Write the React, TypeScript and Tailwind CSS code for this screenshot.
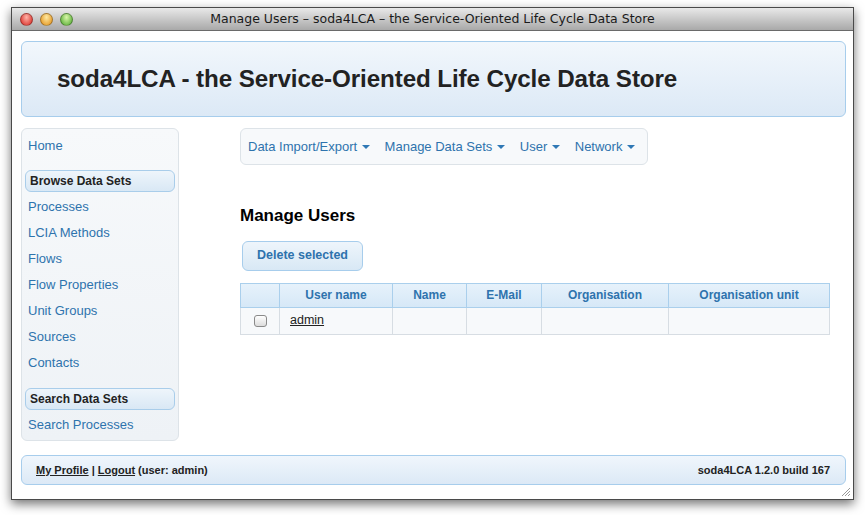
import React from 'react';

const sideLinks1 = ['Processes', 'LCIA Methods', 'Flows', 'Flow Properties', 'Unit Groups', 'Sources', 'Contacts'];
const navItems = ['Data Import/Export', 'Manage Data Sets', 'User', 'Network'];

const Caret = () => (
  <span className="ml-[5px] inline-block h-0 w-0 border-x-[4px] border-t-[4px] border-x-transparent border-t-[#2f78b5] align-middle" />
);

const Light = ({ from, to }: { from: string; to: string }) => (
  <span
    className={`h-[13px] w-[13px] rounded-full border border-black/30 bg-radial-[at_50%_30%] ${from} ${to}`}
  />
);

const SideHeader = ({ label }: { label: string }) => (
  <div className="mx-[3px] flex h-[22px] items-center rounded-[6px] border border-[#a9cdea] bg-linear-to-b from-[#eef5fb] to-[#d9e8f5] px-[4px] text-[12px] font-bold text-[#222]">
    {label}
  </div>
);

const SideLink = ({ label }: { label: string }) => (
  <div className="flex h-[26px] items-center px-[6px] text-[13px] text-[#2e73ad]">{label}</div>
);

export default function App() {
  return (
    <div className="h-[515px] w-[865px] bg-white pl-[11px] pt-[7px] font-['Liberation_Sans',Arial,sans-serif]">
      <div className="relative flex h-[493px] w-[843px] flex-col border border-[#4a4a4a] bg-white shadow-[0_4px_10px_rgba(0,0,0,0.55)]">
        {/* title bar */}
        <div className="relative flex h-[23px] items-center border-b border-[#6a6a6a] bg-linear-to-b from-[#e9e9e9] to-[#a9a9a9]">
          <div className="ml-[8px] flex gap-[7px]">
            <Light from="from-[#ffb3a8]" to="to-[#d6221c]" />
            <Light from="from-[#ffe9a0]" to="to-[#e08c12]" />
            <Light from="from-[#d9f7a8]" to="to-[#4aa52a]" />
          </div>
          <div className="absolute inset-x-0 text-center font-['DejaVu_Sans',sans-serif] text-[12.5px] text-[#1a1a1a]">
            Manage Users – soda4LCA – the Service-Oriented Life Cycle Data Store
          </div>
        </div>

        <div className="flex flex-1 flex-col pl-[9px] pr-[7px] pt-[10px]">
          {/* header */}
          <div className="flex h-[76px] items-center rounded-[6px] border border-[#a7cdec] bg-linear-to-b from-[#f2f7fc] to-[#dce9f6] pl-[35px]">
            <h1 className="text-[24.2px] font-bold tracking-[-0.1px] text-[#222]">
              soda4LCA - the Service-Oriented Life Cycle Data Store
            </h1>
          </div>

          <div className="mt-[11px] flex">
            {/* sidebar */}
            <div className="flex h-[313px] w-[158px] flex-col rounded-[6px] border border-[#dde3e8] bg-linear-to-b from-[#f7f9fb] to-[#eef2f6] pt-[4px]">
              <SideLink label="Home" />
              <div className="h-[11px]" />
              <SideHeader label="Browse Data Sets" />
              <div className="h-[2px]" />
              {sideLinks1.map((l) => (
                <SideLink key={l} label={l} />
              ))}
              <div className="h-[12px]" />
              <SideHeader label="Search Data Sets" />
              <div className="h-[2px]" />
              <SideLink label="Search Processes" />
            </div>

            {/* main */}
            <div className="ml-[61px] flex flex-col">
              <div className="flex h-[37px] w-[408px] items-center gap-[14.5px] rounded-[6px] border border-[#dde3e8] bg-[#f7f9fb] px-[7px] pt-[1px] text-[13px] text-[#2e73ad]">
                {navItems.map((n) => (
                  <span key={n} className="flex items-center">
                    {n}
                    <Caret />
                  </span>
                ))}
              </div>

              <h2 className="mt-[38px] text-[17px] font-bold text-black">Manage Users</h2>

              <button className="ml-[2px] mt-[12px] h-[30px] w-[121px] rounded-[6px] border border-[#a7cdec] bg-linear-to-b from-[#eef5fb] to-[#d8e8f5] text-[12.5px] font-bold text-[#2e73ad]">
                Delete selected
              </button>

              <table className="mt-[12px] w-[590px] border-collapse text-[12px]">
                <thead>
                  <tr className="h-[24px] bg-linear-to-b from-[#e7f2fb] to-[#d6e8f7] font-bold text-[#2e73ad]">
                    <th className="w-[39px] border border-[#aacfec]"></th>
                    <th className="w-[113px] border border-[#aacfec]">User name</th>
                    <th className="w-[74px] border border-[#aacfec]">Name</th>
                    <th className="w-[75px] border border-[#aacfec]">E-Mail</th>
                    <th className="w-[127px] border border-[#aacfec]">Organisation</th>
                    <th className="border border-[#aacfec]">Organisation unit</th>
                  </tr>
                </thead>
                <tbody>
                  <tr className="h-[27px] bg-[#f7f9fb]">
                    <td className="border border-[#d7dde3] text-center">
                      <span className="inline-block h-[12px] w-[13px] rounded-[3px] border border-[#8a8a8a] bg-linear-to-b from-white to-[#dcdcdc] align-middle" />
                    </td>
                    <td className="border border-[#d7dde3] pl-[10px] text-[12.5px] text-[#222] underline">admin</td>
                    <td className="border border-[#d7dde3]"></td>
                    <td className="border border-[#d7dde3]"></td>
                    <td className="border border-[#d7dde3]"></td>
                    <td className="border border-[#d7dde3]"></td>
                  </tr>
                </tbody>
              </table>
            </div>
          </div>

          {/* footer */}
          <div className="mt-[14px] flex h-[30px] items-center justify-between rounded-[6px] border border-[#a7cdec] bg-linear-to-b from-[#f0f6fc] to-[#dce9f6] pl-[14px] pr-[15px] text-[11px] font-bold text-[#222]">
            <span>
              <span className="underline">My Profile</span> | <span className="underline">Logout</span> (user: admin)
            </span>
            <span>soda4LCA 1.2.0 build 167</span>
          </div>
        </div>

        {/* resize grip */}
        <svg className="absolute bottom-[2px] right-[2px]" width="11" height="11" viewBox="0 0 11 11">
          <path d="M10 2 L2 10 M10 5 L5 10 M10 8 L8 10" stroke="#999" strokeWidth="1" />
        </svg>
      </div>
    </div>
  );
}
